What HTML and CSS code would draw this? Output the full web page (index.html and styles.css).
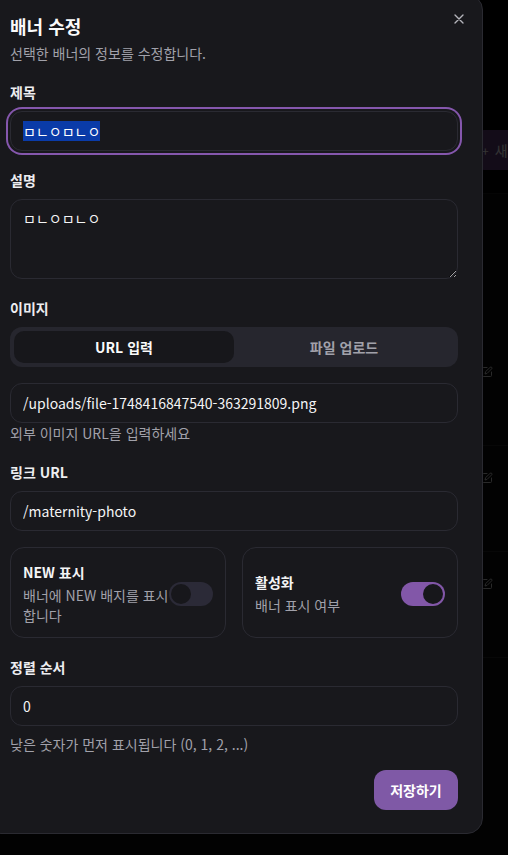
FILE: index.html
```html
<!DOCTYPE html>
<html lang="ko">
<head>
<meta charset="utf-8">
<title>배너 수정</title>
<link rel="stylesheet" href="styles.css">
</head>
<body>
<div class="page">
  <div class="page-btn"><span class="plus">+</span><span>새</span></div>
  <div class="page-head"></div>
  <div class="page-rows">
    <div class="row"><svg class="edit" viewBox="0 0 24 24"><path d="M12 3H5a2 2 0 0 0-2 2v14a2 2 0 0 0 2 2h14a2 2 0 0 0 2-2v-7"/><path d="M18.4 2.6a2.1 2.1 0 1 1 3 3L12 15l-4 1 1-4Z"/></svg></div>
    <div class="row"><svg class="edit" viewBox="0 0 24 24"><path d="M12 3H5a2 2 0 0 0-2 2v14a2 2 0 0 0 2 2h14a2 2 0 0 0 2-2v-7"/><path d="M18.4 2.6a2.1 2.1 0 1 1 3 3L12 15l-4 1 1-4Z"/></svg></div>
    <div class="row"><svg class="edit" viewBox="0 0 24 24"><path d="M12 3H5a2 2 0 0 0-2 2v14a2 2 0 0 0 2 2h14a2 2 0 0 0 2-2v-7"/><path d="M18.4 2.6a2.1 2.1 0 1 1 3 3L12 15l-4 1 1-4Z"/></svg></div>
  </div>
</div>
<div class="overlay"></div>
<div class="dialog">
  <button class="close" aria-label="닫기"><svg viewBox="0 0 24 24"><path d="M18 6 6 18M6 6l12 12"/></svg></button>
  <h2 class="title">배너 수정</h2>
  <p class="subtitle">선택한 배너의 정보를 수정합니다.</p>

  <div class="field">
    <label class="label">제목</label>
    <div class="input focused"><span class="sel">ㅁㄴㅇㅁㄴㅇ</span></div>
  </div>

  <div class="field">
    <label class="label">설명</label>
    <textarea class="textarea">ㅁㄴㅇㅁㄴㅇ</textarea>
  </div>

  <div class="field">
    <label class="label">이미지</label>
    <div class="tabs">
      <div class="tab active">URL 입력</div>
      <div class="tab">파일 업로드</div>
    </div>
    <input class="input url" value="/uploads/file-1748416847540-363291809.png">
    <p class="help tight">외부 이미지 URL을 입력하세요</p>
  </div>

  <div class="field">
    <label class="label">링크 URL</label>
    <input class="input" value="/maternity-photo">
  </div>

  <div class="cards">
    <div class="card">
      <div class="card-text">
        <div class="card-title">NEW 표시</div>
        <div class="card-desc">배너에 NEW 배지를 표시합니다</div>
      </div>
      <span class="switch"><span class="thumb"></span></span>
    </div>
    <div class="card">
      <div class="card-text">
        <div class="card-title">활성화</div>
        <div class="card-desc">배너 표시 여부</div>
      </div>
      <span class="switch on"><span class="thumb"></span></span>
    </div>
  </div>

  <div class="field">
    <label class="label">정렬 순서</label>
    <input class="input" value="0">
    <p class="help">낮은 숫자가 먼저 표시됩니다 (0, 1, 2, ...)</p>
  </div>

  <div class="footer">
    <button class="save">저장하기</button>
  </div>
</div>
</body>
</html>
```
FILE: styles.css
```css
* { box-sizing: border-box; }
html, body { margin: 0; padding: 0; }
body {
  background: #000;
  font-family: "Noto Sans CJK KR", "Noto Sans", sans-serif;
  color: #fafafa;
  width: 508px;
  height: 855px;
  overflow: hidden;
  position: relative;
}

/* background page (under overlay) */
.page { position: absolute; inset: 0; background: #000; }
.page-btn {
  position: absolute; left: 476px; top: 130px;
  width: 32px;
  height: 40px; padding: 0 0 0 6px;
  background: #5e3c78;
  border-radius: 8px 0 0 8px;
  display: flex; align-items: center; gap: 6px;
  font-size: 14px; color: #fff; white-space: nowrap;
}
.plus { font-size: 12px; }
.page-head {
  position: absolute; left: 0; right: 0; top: 193px; bottom: 0;
  background: #0a0a0a;
  border-top: 1px solid #1c1c1c;
}
.page-rows {
  position: absolute; left: 0; right: 0; top: 340px;
}
.row {
  height: 106px;
  border-bottom: 1px solid #262626;
  display: flex; align-items: flex-start; justify-content: flex-end;
  padding-top: 26px;
  padding-right: 15px;
}
.edit { width: 12px; height: 12px; fill: none; stroke: #cfcfcf; stroke-width: 2; stroke-linecap: round; stroke-linejoin: round; }
.overlay { position: absolute; inset: 0; background: rgba(0,0,0,0.8); }

/* dialog */
.dialog {
  position: absolute;
  left: -15px; top: -6px;
  width: 498px;
  background: #18181c;
  border: 1px solid #2a2a31;
  border-radius: 16px;
  padding: 17px 24px 23px;
}
.close {
  position: absolute; top: 16px; right: 15px;
  width: 16px; height: 16px; padding: 0;
  background: none; border: 0;
  display: flex;
}
.close svg { width: 16px; height: 16px; fill: none; stroke: #b4b4bb; stroke-width: 2; stroke-linecap: round; }
.title {
  margin: 0;
  font-size: 18px; line-height: 28px; font-weight: 700;
  color: #fafafa;
}
.subtitle {
  margin: 3px 0 0;
  font-size: 14px; line-height: 20px;
  color: #a1a1aa;
}
.field { margin-top: 19px; display: flex; flex-direction: column; }
.label {
  font-size: 14px; line-height: 20px; font-weight: 700;
  color: #ededf0;
  margin-bottom: 9px;
}
.input {
  display: flex; align-items: center;
  width: 100%; height: 40px;
  background: #18181c;
  border: 1px solid #2a2a32;
  border-radius: 12px;
  padding: 0 12px;
  font-family: inherit;
  font-size: 14px; font-weight: 400;
  color: #f4f4f5;
  outline: none;
}
.input.focused {
  box-shadow: 0 0 0 2px #18181c, 0 0 0 4px #8557ad;
}
.sel {
  background: #0a3ba8;
  color: #fff;
  line-height: 20px;
  font-weight: 400;
}
.textarea {
  width: 100%; height: 80px;
  background: #18181c;
  border: 1px solid #2a2a32;
  border-radius: 12px;
  padding: 8px 12px;
  font-family: inherit;
  font-size: 14px; line-height: 20px;
  color: #f4f4f5;
  resize: vertical;
  outline: none;
  display: block;
}
.tabs {
  height: 40px;
  background: #26262e;
  border-radius: 12px;
  padding: 4px;
  display: grid; grid-template-columns: 1fr 1fr;
}
.tab {
  display: flex; align-items: center; justify-content: center;
  border-radius: 10px;
  font-size: 14px; font-weight: 700;
  color: #a1a1aa;
}
.tab.active { background: #17171b; color: #fafafa; }
.url { margin-top: 16px; }
.help {
  margin: 8px 0 0;
  font-size: 14px; line-height: 20px;
  color: #a1a1aa;
}
.help.tight { margin-top: 0; }

.cards {
  margin-top: 16px;
  display: grid; grid-template-columns: 1fr 1fr; gap: 16px;
}
.card {
  border: 1px solid #2a2a32;
  border-radius: 14px;
  padding: 14px 12px 12px;
  display: flex; align-items: center; justify-content: space-between;
}
.card-text { flex: 1; min-width: 0; }
.card-title { font-size: 14px; line-height: 20px; font-weight: 700; color: #f4f4f5; }
.card-desc { margin-top: 3px; font-size: 14px; line-height: 20px; color: #a1a1aa; }
.switch {
  flex-shrink: 0;
  width: 44px; height: 24px;
  border-radius: 12px;
  background: #2b2a37;
  padding: 2px;
  display: flex;
}
.thumb {
  width: 20px; height: 20px; border-radius: 50%;
  background: #17171b;
}
.switch.on { background: #8257a8; justify-content: flex-end; }

.footer { margin-top: 16px; display: flex; justify-content: flex-end; }
.save {
  height: 40px; width: 84px;
  border: 0; border-radius: 12px;
  background: #7f59a6;
  color: #fff;
  font-family: inherit;
  font-size: 14px; font-weight: 700;
}
```
